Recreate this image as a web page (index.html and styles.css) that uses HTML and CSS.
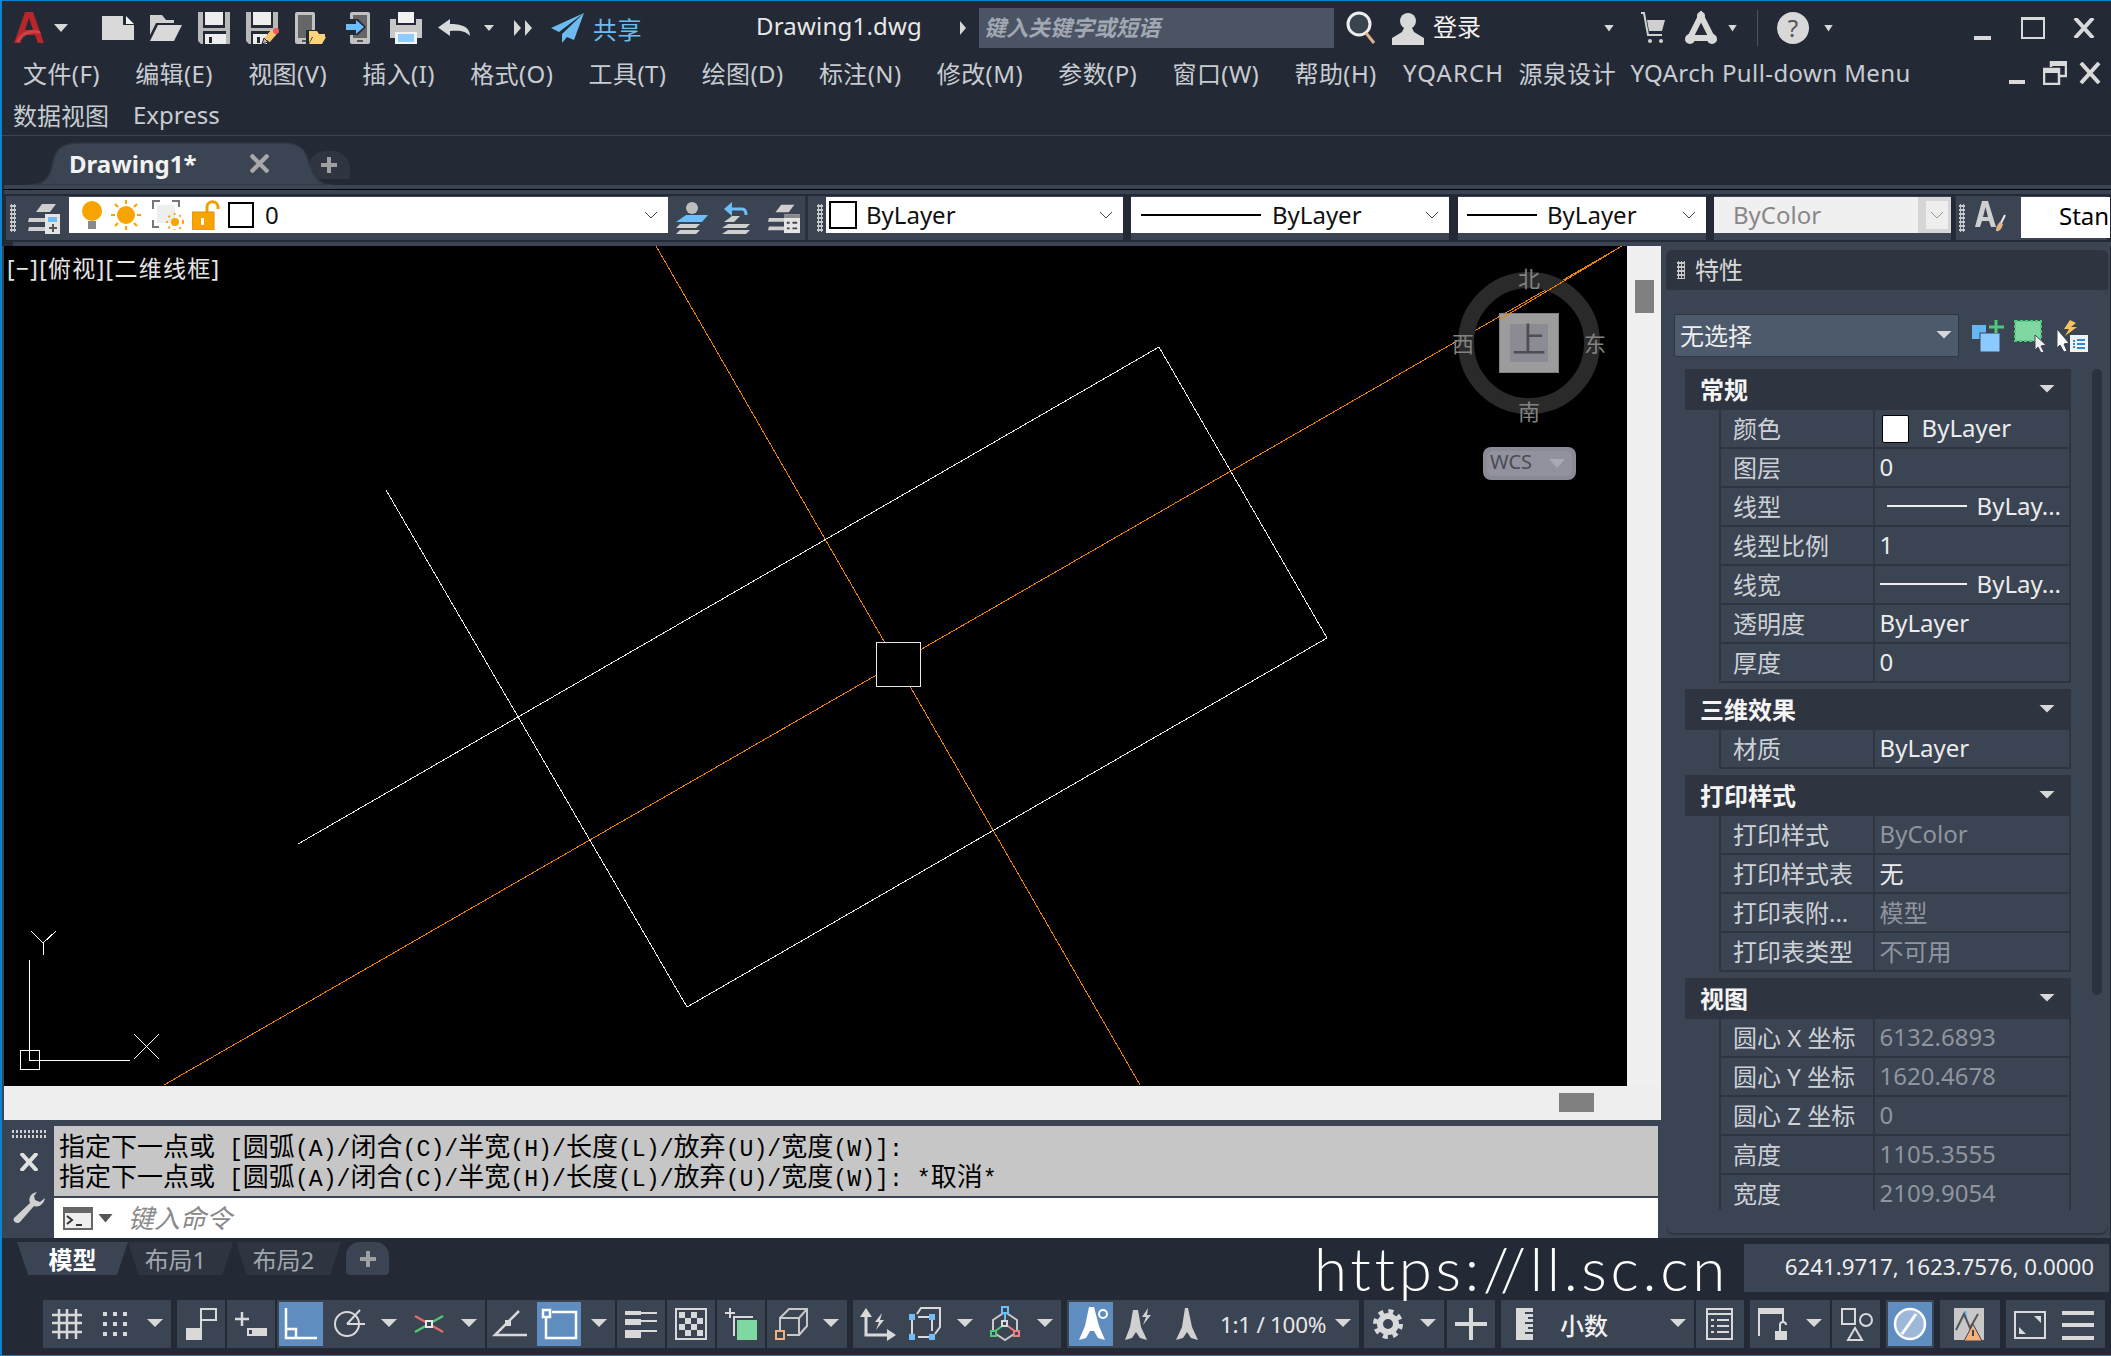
FILE: index.html
```html
<!DOCTYPE html>
<html lang="zh-CN">
<head>
<meta charset="utf-8">
<title>Drawing1.dwg</title>
<link rel="stylesheet" href="styles.css">
</head>
<body>
<div class="app">

<header class="titlebar">
  <svg class="logo" viewBox="0 0 30 32"><path fill="#b8252a" d="M0 31 11 0h8l11 31h-6l-3-8H9l-3 8zM11 18h8l-4-12z"/><path fill="#e0555a" opacity=".6" d="M2 29C8 20 14 16 26 19l1 3C16 19 10 23 5 31z"/></svg>
  <span class="caret caret-title"></span>
  <span class="slot slot-first"><svg viewBox="0 0 48 48"><path fill="#d9d9d9" d="M8 12h21v9h11v15H8z"/><path fill="#f2f2f2" d="M32 12l8 8h-8z"/></svg></span>
  <span class="slot"><svg viewBox="0 0 48 48"><path fill="#d0d0d0" d="M8 11h12l4 5h8v3H14L8 31z"/><path fill="#d9d9d9" d="M16 21h24l-8 16H8z"/></svg></span>
  <span class="slot"><svg viewBox="0 0 48 48"><path fill="#b9b9b9" d="M8 8h32v32H11l-3-3z"/><path fill="#232a35" d="M13 8h22v16H13zM13 27h23v13H13z"/><path fill="#eee" d="M15 8h18v13H15zM15 30h21v10H15z"/><path fill="#232a35" d="M19 33h3v6h-3z"/></svg></span>
  <span class="slot"><svg viewBox="0 0 48 48"><path fill="#b9b9b9" d="M8 8h32v18L26 40H11l-3-3z"/><path fill="#232a35" d="M13 8h22v16H13zM13 27h20v13H13z"/><path fill="#eee" d="M15 8h18v13H15zM15 30h14v10H15z"/><path fill="#232a35" d="M19 33h3v6h-3z"/><path fill="#b9b9b9" stroke="#232a35" d="M24 40l2-6 4 4z"/><path stroke="#f8c46c" stroke-width="7" d="M29 36l7-8"/><circle cx="38" cy="27" r="3" fill="#f15b5b"/></svg></span>
  <span class="slot"><svg viewBox="0 0 48 48"><rect x="9" y="8" width="20" height="32" rx="2" fill="#c2c2c2"/><rect x="12" y="11" width="14" height="23" fill="#666"/><rect x="16" y="36" width="5" height="2" fill="#555"/><path fill="#232a35" d="M20 26h10l10 4v10H20z"/><path fill="#fcd27a" d="M23 27h8l2 3h6v3H26l-3 6z"/><path fill="#fcd27a" d="M27 33h13l-4 7H23z"/></svg></span>
  <span class="slot"><svg viewBox="0 0 48 48"><rect x="16" y="8" width="20" height="32" rx="2" fill="#c2c2c2"/><rect x="19" y="11" width="14" height="23" fill="#666"/><rect x="23" y="36" width="6" height="2" fill="#555"/><path fill="#232a35" d="M10 15h14l8 8-8 8H10z"/><path fill="#6dbdf8" d="M12 20h10v-4l8 7-8 7v-4H12z"/></svg></span>
  <span class="slot"><svg viewBox="0 0 48 48"><path fill="#f2f2f2" d="M16 8h16v11H16z"/><path fill="#c8c8c8" d="M8 15h6v6h20v-6h6v19H8z"/><path fill="#f2f2f2" d="M13 28h22v12H13z"/><path fill="#8ecbff" d="M16 30h16v8H16z"/></svg></span>
  <span class="slot"><svg viewBox="0 0 48 48"><path fill="#d9d9d9" d="M8 23.5 20 15v5c10 0 20 2 20 12-4-5-10-6-20-5v5z"/></svg></span>
  <span class="caret caret-small"></span>
  <span class="redo"><svg viewBox="0 0 20 16"><path fill="#d9d9d9" d="M1 0l7 8-7 8zM12 0l7 8-7 8z"/></svg></span>
  <span class="share"><svg viewBox="0 0 34 30"><path fill="#6cbcf0" d="M33 0 0 15l8 4zM33 0 11 21v9l5-6 7 3z"/></svg><span class="share-text">共享</span></span>
  <span class="doc-name">Drawing1.dwg</span>
  <span class="arrow-right"></span>
  <span class="search">键入关键字或短语</span>
  <span class="search-icon"><svg viewBox="0 0 30 34"><circle cx="13" cy="13" r="11" fill="#3a4350" stroke="#eee" stroke-width="3"/><path stroke="#e0b48a" stroke-width="3" d="M20 22l8 10"/></svg></span>
  <span class="user"><svg viewBox="0 0 32 34"><circle cx="16" cy="10" r="8" fill="#d9d9d9"/><path fill="#d9d9d9" d="M12 17h8l2 4 10 6v7H0v-7l10-6z"/></svg></span>
  <span class="login">登录</span>
  <span class="caret caret-login"></span>
  <span class="cart"><svg viewBox="0 0 26 34"><path fill="none" stroke="#d0d0d0" stroke-width="2" d="M1 2h3l4 22h14"/><path fill="#d0d0d0" d="M7 9h18l-3 11H9z"/><circle cx="10" cy="30" r="2" fill="#d0d0d0"/><circle cx="21" cy="30" r="2" fill="#d0d0d0"/></svg></span>
  <span class="a360"><svg viewBox="0 0 32 34"><path fill="none" stroke="#d9d9d9" stroke-width="6" d="M16 5 5 27h22z"/><circle cx="16" cy="5" r="4" fill="#d9d9d9"/><circle cx="5" cy="28" r="5" fill="#d9d9d9"/><circle cx="27" cy="28" r="5" fill="#d9d9d9"/></svg></span>
  <span class="caret caret-a360"></span>
  <span class="v-divider"></span>
  <span class="help">?</span>
  <span class="caret caret-help"></span>
  <span class="win win-min"></span>
  <span class="win win-max"></span>
  <span class="win-x"><svg viewBox="0 0 22 20"><path stroke="#d9d9d9" stroke-width="4" d="M2 0l18 20M20 0 2 20"/></svg></span>
</header>

<nav class="menubar">
  <span>文件(F)</span><span>编辑(E)</span><span>视图(V)</span><span>插入(I)</span><span>格式(O)</span><span>工具(T)</span><span>绘图(D)</span><span>标注(N)</span><span>修改(M)</span><span>参数(P)</span><span>窗口(W)</span><span>帮助(H)</span><span class="tight-a">YQARCH</span><span class="tight-b">源泉设计</span><span class="tight-b">YQArch Pull-down Menu</span>
  <span class="mdi"><i class="mdi-min"></i><svg class="mdi-restore" viewBox="0 0 24 24"><path fill="none" stroke="#d9d9d9" stroke-width="2.5" d="M8 6V1h15v14h-6M1 8h15v15H1z"/><path stroke="#d9d9d9" stroke-width="4" d="M8 3h15M1 10h15"/></svg><svg class="mdi-x" viewBox="0 0 22 20"><path stroke="#d9d9d9" stroke-width="4" d="M2 0l18 20M20 0 2 20"/></svg></span>
</nav>
<nav class="menubar menubar-second"><span>数据视图</span><span>Express</span></nav>

<div class="tabstrip">
  <div class="doc-tab">
    <svg class="doc-tab-shape" viewBox="0 0 301 43"><path fill="#3b4453" stroke="#2f3644" stroke-width="1.5" d="M0 43c14 0 20-8 22-19C25 8 30 1 50 1h202c20 0 24 7 28 23 4 11 10 19 21 19z"/></svg>
    <span class="doc-tab-title">Drawing1*</span>
    <svg class="doc-tab-close" viewBox="0 0 20 20"><path stroke="#a8a8a8" stroke-width="4.5" d="M1 1l18 18M19 1 1 19"/></svg>
  </div>
  <div class="tab-add"><svg viewBox="0 0 16 16"><path stroke="#a0a0a0" stroke-width="4" d="M8 0v16M0 8h16"/></svg></div>
</div>
<div class="tabline"></div>

<div class="toolbar">
  <div class="tb-group tb-layers">
    <span class="grip"></span>
    <svg class="tb-ico" viewBox="0 0 34 32"><path fill="#cfcfcf" d="M8 10 14 2h14l-6 8zM1 16h18l-1 4H0zM1 25h16v4H0z"/><rect x="17" y="12" width="15" height="20" fill="#e4e4e4"/><rect x="20" y="15" width="9" height="5" fill="#6dbdf8"/><path stroke="#555" stroke-width="2" d="M21 26h8M25 22v8"/></svg>
  </div>
  <div class="dd dd-layer">
    <svg class="ico-bulb" viewBox="0 0 20 28"><circle cx="10" cy="10" r="10" fill="#f7a400"/><rect x="6" y="20" width="8" height="8" fill="#8a8a8a"/></svg>
    <svg class="ico-sun" viewBox="0 0 30 30"><circle cx="15" cy="15" r="9" fill="#f7a400"/><path stroke="#f7a400" stroke-width="2" d="M15 0v4M15 26v4M0 15h4M26 15h4M4 4l3 3M23 23l3 3M26 4l-3 3M4 26l3-3"/></svg>
    <svg class="ico-freeze" viewBox="0 0 32 30"><path fill="none" stroke="#777" stroke-width="2" d="M8 1H1v8M20 1h7v6M1 20v7h6"/><rect x="5" y="5" width="18" height="18" fill="#eee"/><circle cx="23" cy="22" r="4" fill="#f7a400"/><circle cx="23" cy="22" r="8" fill="none" stroke="#f7a400" stroke-width="2" stroke-dasharray="2 4"/></svg>
    <svg class="ico-lock" viewBox="0 0 28 30"><path fill="none" stroke="#f29e00" stroke-width="3" d="M15 14V7c0-7 11-7 11 0v2"/><rect y="12" width="22" height="18" fill="#f7a400" stroke="#e48f00"/><rect x="9" y="18" width="3" height="7" fill="#fff"/></svg>
    <span class="swatch"></span>
    <span class="dd-text">0</span>
    <svg class="chev" viewBox="0 0 12 7"><path fill="none" stroke="#444" d="M0 0l6 6 6-6"/></svg>
  </div>
  <div class="tb-group tb-layer-tools">
    <svg viewBox="0 0 32 32"><circle cx="16" cy="6" r="6" fill="#bdbdbd"/><path fill="#6dbdf8" d="M10 13h12l10 0-6 7H0z"/><path fill="#cfcfcf" d="M4 22h20l-4 4H0zM4 28h20l-4 4H0z"/></svg>
    <svg viewBox="0 0 32 32"><path fill="none" stroke="#6dbdf8" stroke-width="3" d="M8 7h12c3 0 4 2 4 6"/><path fill="#6dbdf8" d="M10 0v14L2 7z"/><path fill="#cfcfcf" d="M10 14h8l-6 6H2zM6 22h22l-4 4H0zM6 28h22l-4 4H0z"/></svg>
    <svg viewBox="0 0 34 32"><path fill="#cfcfcf" d="M8 10 14 2h14l-6 8zM1 16h18l-1 4H0zM1 25h16v4H0z"/><rect x="17" y="12" width="17" height="20" fill="#e4e4e4"/><rect x="17" y="12" width="17" height="4" fill="#888"/><path stroke="#444" stroke-width="2" d="M20 21h3M26 21h5M20 27h3M26 27h5"/></svg>
  </div>
  <div class="tb-group tb-grip"><span class="grip"></span></div>
  <div class="dd dd-color"><span class="swatch swatch-color"></span><span class="dd-text">ByLayer</span><svg class="chev" viewBox="0 0 12 7"><path fill="none" stroke="#444" d="M0 0l6 6 6-6"/></svg></div>
  <div class="dd dd-ltype"><span class="ltline ltline-long"></span><span class="dd-text">ByLayer</span><svg class="chev" viewBox="0 0 12 7"><path fill="none" stroke="#444" d="M0 0l6 6 6-6"/></svg></div>
  <div class="dd dd-lweight"><span class="ltline ltline-short"></span><span class="dd-text">ByLayer</span><svg class="chev" viewBox="0 0 12 7"><path fill="none" stroke="#444" d="M0 0l6 6 6-6"/></svg></div>
  <div class="dd dd-plot"><span class="dd-text dd-disabled">ByColor</span><span class="dd-btn"><svg class="chev-btn" viewBox="0 0 12 7"><path fill="none" stroke="#999" d="M0 0l6 6 6-6"/></svg></span></div>
  <div class="tb-group tb-style">
    <span class="grip"></span>
    <svg class="style-ico" viewBox="0 0 32 34"><path fill="#cfcfcf" d="M8 0h6l8 26h-5l-2-6H8l-2 6H1zM9 16h5L11.500 6z"/><path fill="#e0b48a" d="M22 30c0-5 2-7 4-9l3 2c-1 4-3 8-7 7z"/><path stroke="#eee" stroke-width="2" d="M27 22l4-8"/></svg>
    <span class="style-box">Standard</span>
  </div>
</div>
<div class="strip"></div>

<main class="main">
  <section class="left">
    <div class="viewport">
      <div class="canvas">
        <svg class="drawing" viewBox="4 246 1623 840">
          <g class="lines" fill="none" stroke-width="1">
            <path stroke="#f08000" d="M656 246 1140 1085M164 1085 1622 246"/>
            <path stroke="#e8e8e8" d="M298 844 1159 347 1327 638 687 1007 386 490"/>
            <rect x="876.500" y="642.500" width="44" height="44" fill="#000" stroke="#e8e8e8"/>
            <path stroke="#fff" d="M29.500 960V1060.500H130M20.500 1050.500h19v19h-19zM134 1034l25 25M159 1034l-25 25M31 931l12 12 13-12M43 943v12"/>
          </g>
          <circle cx="1529" cy="343" r="63" fill="none" stroke="#2a2a2a" stroke-width="16"/>
          <rect x="1499.500" y="313.500" width="59" height="59" fill="#9c9c9c" stroke="#808080"/>
          <rect x="1510" y="324" width="38" height="38" fill="#8b8b93"/>
          <path class="lines" stroke="#f08000" fill="none" d="M1499 320 1622 246"/>
          <text class="cube-top" x="1529" y="352">上</text>
          <text class="cube-dir" x="1529" y="287">北</text>
          <text class="cube-dir" x="1529" y="420">南</text>
          <text class="cube-dir" x="1463" y="352">西</text>
          <text class="cube-dir" x="1595" y="352">东</text>
          <rect x="1483" y="447" width="93" height="33" rx="8" fill="#8a8a96"/>
          <rect x="1487" y="451" width="85" height="25" rx="6" fill="#92929e"/>
          <text class="wcs" x="1490" y="469">WCS</text>
          <path fill="#a9a9b3" d="M1549 459h16l-8 9z"/>
        </svg>
        <span class="view-label">[−][俯视][二维线框]</span>
      </div>
      <div class="vscroll"><span class="vthumb"></span></div>
    </div>
    <div class="hscroll"><span class="hthumb"></span></div>
    <div class="cmd">
      <div class="cmd-handle">
        <span class="cmd-grip"></span>
        <svg class="cmd-x" viewBox="0 0 18 18"><path stroke="#e0e0e0" stroke-width="4" d="M1 0l16 18M17 0 1 18"/></svg>
        <svg class="cmd-wrench" viewBox="0 0 32 32"><path fill="#d0d0d0" d="M24 0c-6 1-9 6-7 11L1 26c-2 3 3 7 6 4L21 14c5 2 10-2 11-8l-5 4-5-2-1-4z"/></svg>
      </div>
      <div class="cmd-body">
        <div class="cmd-history">
          <div class="cmd-line"><span class="cn">指定下一点或</span> [<span class="cn">圆弧</span>(A)/<span class="cn">闭合</span>(C)/<span class="cn">半宽</span>(H)/<span class="cn">长度</span>(L)/<span class="cn">放弃</span>(U)/<span class="cn">宽度</span>(W)]:</div>
          <div class="cmd-line"><span class="cn">指定下一点或</span> [<span class="cn">圆弧</span>(A)/<span class="cn">闭合</span>(C)/<span class="cn">半宽</span>(H)/<span class="cn">长度</span>(L)/<span class="cn">放弃</span>(U)/<span class="cn">宽度</span>(W)]: *<span class="cn">取消</span>*</div>
        </div>
        <div class="cmd-input">
          <svg class="cmd-prompt" viewBox="0 0 30 23"><rect width="30" height="23" fill="#666"/><rect x="2" y="6" width="26" height="15" fill="#eee"/><path fill="none" stroke="#333" stroke-width="2" d="M4 9l5 4-5 4M13 18h6"/></svg>
          <span class="caret-dark"></span>
          <span class="cmd-placeholder">键入命令</span>
        </div>
      </div>
    </div>
  </section>

  <aside class="panel">
    <div class="panel-head"><span class="grip grip-panel"></span><span class="panel-title">特性</span></div>
    <div class="panel-body">
      <div class="panel-tools">
        <div class="sel">无选择<span class="tri sel-tri"></span></div>
        <svg class="pt-ico" viewBox="0 0 32 32"><rect y="5" width="14" height="14" fill="#66b6f2"/><rect x="8" y="13" width="20" height="19" fill="#8bc9ff" stroke="#3b4453"/><path stroke="#4ec77f" stroke-width="3" d="M24 0v13M17 7h15"/></svg>
        <svg class="pt-ico" viewBox="0 0 32 32"><rect x="1" y="1" width="26" height="20" fill="#7fd8a0" stroke="#4ec77f" stroke-width="2" stroke-dasharray="3 2"/><path fill="#eee" stroke="#3b4453" d="M21 15l11 10-5 1 3 6-3 1-3-6-3 3z"/></svg>
        <svg class="pt-ico" viewBox="0 0 32 32"><path fill="#f7c25c" d="M14 0l-6 9h5l-4 7 12-9h-6l5-4z"/><path fill="#fff" stroke="#3b4453" d="M1 9l12 14-5 1 3 7-3 1-4-7-3 3z"/><rect x="14" y="15" width="18" height="17" fill="#f2f2f2"/><path stroke="#2b8bd8" stroke-width="2" stroke-dasharray="2 1" d="M18 20v9"/><path stroke="#2b8bd8" stroke-width="2" d="M21 20h8M21 24h8M21 28h8"/></svg>
      </div>
      <div class="props">
        <div class="props-scroll">
          <section class="sec">
            <div class="sec-head">常规<span class="tri"></span></div>
            <div class="sec-rows">
              <div class="row"><span class="k">颜色</span><span class="v"><span class="v-swatch"></span>ByLayer</span></div>
              <div class="row"><span class="k">图层</span><span class="v">0</span></div>
              <div class="row"><span class="k">线型</span><span class="v"><span class="v-line v-line-a"></span>ByLay...</span></div>
              <div class="row"><span class="k">线型比例</span><span class="v">1</span></div>
              <div class="row"><span class="k">线宽</span><span class="v"><span class="v-line v-line-b"></span>ByLay...</span></div>
              <div class="row"><span class="k">透明度</span><span class="v">ByLayer</span></div>
              <div class="row"><span class="k">厚度</span><span class="v">0</span></div>
            </div>
          </section>
          <section class="sec">
            <div class="sec-head">三维效果<span class="tri"></span></div>
            <div class="sec-rows">
              <div class="row"><span class="k">材质</span><span class="v">ByLayer</span></div>
            </div>
          </section>
          <section class="sec">
            <div class="sec-head">打印样式<span class="tri"></span></div>
            <div class="sec-rows">
              <div class="row"><span class="k">打印样式</span><span class="v off">ByColor</span></div>
              <div class="row"><span class="k">打印样式表</span><span class="v">无</span></div>
              <div class="row"><span class="k">打印表附...</span><span class="v off">模型</span></div>
              <div class="row"><span class="k">打印表类型</span><span class="v off">不可用</span></div>
            </div>
          </section>
          <section class="sec">
            <div class="sec-head">视图<span class="tri"></span></div>
            <div class="sec-rows">
              <div class="row"><span class="k">圆心 X 坐标</span><span class="v off">6132.6893</span></div>
              <div class="row"><span class="k">圆心 Y 坐标</span><span class="v off">1620.4678</span></div>
              <div class="row"><span class="k">圆心 Z 坐标</span><span class="v off">0</span></div>
              <div class="row"><span class="k">高度</span><span class="v off">1105.3555</span></div>
              <div class="row"><span class="k">宽度</span><span class="v off">2109.9054</span></div>
            </div>
          </section>
        </div>
        <div class="props-track"></div>
      </div>
    </div>
  </aside>
</main>

<div class="lower">
  <div class="ltabs">
    <span class="ltab ltab-on">模型</span>
    <span class="ltab">布局1</span>
    <span class="ltab">布局2</span>
    <span class="ltab-add"><svg viewBox="0 0 16 16"><path stroke="#a0a0a0" stroke-width="4" d="M8 0v16M0 8h16"/></svg></span>
  </div>
  <div class="coords">6241.9717, 1623.7576, 0.0000</div>
</div>

<footer class="status">
  <div class="sg"><span class="s"><svg viewBox="0 0 48 48"><path stroke="#d9d9d9" stroke-width="2.500" d="M16 9v30M24 9v30M33 9v30M9 15h30M9 23h30M9 32h30"/></svg></span><span class="s"><svg viewBox="0 0 48 48"><path fill="#d9d9d9" d="M12 12h4v4h-4zM22 12h4v4h-4zM32 12h4v4h-4zM12 22h4v4h-4zM22 22h4v4h-4zM32 22h4v4h-4zM12 32h4v4h-4zM22 32h4v4h-4zM32 32h4v4h-4z"/></svg></span><span class="caret"></span></div>
  <div class="sg sep"><span class="s"><svg viewBox="0 0 48 48"><rect x="9" y="28" width="16" height="12" fill="#d9d9d9"/><path fill="none" stroke="#d9d9d9" stroke-width="2" d="M24 28V9h15v11H24"/></svg></span></div>
  <div class="sg"><span class="s"><svg viewBox="0 0 48 48"><path stroke="#d9d9d9" stroke-width="2.500" d="M15 12v14M8 19h14"/><rect x="20" y="28" width="20" height="8" fill="#d9d9d9"/><rect x="22" y="30" width="3" height="4" fill="#3b4453"/></svg></span></div>
  <div class="sg"><span class="s on"><svg viewBox="0 0 48 48"><path fill="none" stroke="#fff" stroke-width="2.500" d="M9 8v30h31M9 29h10v9"/></svg></span><span class="s"><svg viewBox="0 0 48 48"><circle cx="22" cy="24" r="12" fill="none" stroke="#d9d9d9" stroke-width="2"/><path fill="none" stroke="#d9d9d9" stroke-width="2" d="M22 24h18M22 24 35 10"/></svg></span><span class="caret"></span><span class="s"><svg viewBox="0 0 48 48"><path stroke="#e06c6c" stroke-width="2.500" d="M10 16l28 16"/><path stroke="#55c779" stroke-width="2.500" d="M10 32l28-16"/><rect x="21" y="21" width="6" height="6" fill="#3b4453" stroke="#e4e4e4" stroke-width="2"/></svg></span><span class="caret"></span></div>
  <div class="sg"><span class="s"><svg viewBox="0 0 48 48"><path fill="none" stroke="#d9d9d9" stroke-width="2.500" d="M40 35H8L32 11"/><rect x="18" y="20" width="6" height="6" fill="#d9d9d9"/></svg></span><span class="s on"><svg viewBox="0 0 48 48"><path fill="none" stroke="#fff" stroke-width="2.500" d="M8 10h7v7H8zM11 17v21h30V12H17"/></svg></span><span class="caret"></span></div>
  <div class="sg"><span class="s"><svg viewBox="0 0 48 48"><path fill="#d9d9d9" d="M8 11h16v4H8zM24 12h16v2H24zM8 19h16v6H8zM24 20h16v2H24zM8 30h16v8H8zM24 30h16v2H24z"/></svg></span></div>
  <div class="sg"><span class="s"><svg viewBox="0 0 48 48"><rect x="9" y="9" width="30" height="30" fill="none" stroke="#d9d9d9" stroke-width="2"/><path fill="#d9d9d9" d="M12 12h6v6h-6zM24 12h6v6h-6zM18 18h6v6h-6zM30 18h6v6h-6zM12 24h6v6h-6zM24 24h6v6h-6zM18 30h6v6h-6zM30 30h6v6h-6z"/></svg></span></div>
  <div class="sg"><span class="s"><svg viewBox="0 0 48 48"><path stroke="#d9d9d9" stroke-width="2" fill="none" d="M13 8v10M8 13h10M36 17H17v19"/><rect x="20" y="20" width="20" height="20" fill="#7fd8a0"/></svg></span></div>
  <div class="sg"><span class="s"><svg viewBox="0 0 48 48"><path fill="none" stroke="#c8c8c8" stroke-width="2" d="M13 30V18h19v17H20M13 18l9-9h18v17l-8 9M32 18l8-9"/><rect x="9" y="31" width="8" height="8" fill="none" stroke="#f5b07a" stroke-width="2"/></svg></span><span class="caret"></span></div>
  <div class="sg sep"><span class="s"><svg viewBox="0 0 48 48"><path fill="none" stroke="#d9d9d9" stroke-width="3" d="M13 14v21h22"/><path fill="#d9d9d9" d="M13 8l6 9H7zM43 35l-9-6v12zM29 13l-7 9h4l-3 8 8-10h-4z"/></svg></span><span class="s"><svg viewBox="0 0 48 48"><path fill="none" stroke="#d9d9d9" stroke-width="2" d="M11 20v14M17 37h11M31 17v14M17 17h11M16 14l4-6h19v19l-5 7"/><path fill="#6dbdf8" d="M8 14h6v6H8zM28 14h6v6h-6zM8 34h6v6H8zM28 34h6v6h-6z"/></svg></span><span class="caret"></span><span class="s"><svg viewBox="0 0 48 48"><path fill="none" stroke="#c8c8c8" stroke-width="2" d="M24 12 36 20v12l-12 8-12-8V20z"/><path stroke="#6dbdf8" stroke-width="2" d="M24 10v12"/><path stroke="#55c779" stroke-width="2" d="M24 24l-11 8"/><path stroke="#f08080" stroke-width="2" d="M24 24l11 8"/><rect x="21" y="7" width="6" height="6" fill="#3b4453" stroke="#6dbdf8" stroke-width="2"/><rect x="10" y="31" width="5" height="5" fill="#3b4453" stroke="#55c779" stroke-width="2"/><rect x="33" y="31" width="5" height="5" fill="#3b4453" stroke="#f08080" stroke-width="2"/><rect x="21" y="21" width="5" height="5" fill="#3b4453" stroke="#d9d9d9" stroke-width="2"/></svg></span><span class="caret"></span></div>
  <div class="sg sep"><span class="s on"><svg viewBox="0 0 48 48"><path fill="#fff" d="M22 7h5l5 19 6 14-7-2-4-7h-4l-4 7-7 2 6-14z"/><circle cx="36" cy="14" r="4" fill="none" stroke="#fff" stroke-width="2"/></svg></span><span class="s"><svg viewBox="0 0 48 48"><path fill="#d0d0d0" d="M18 10h5l3 17 6 13-7-2-4-6-4 6-7 2 5-13z"/><path fill="#d0d0d0" d="M33 8l-6 9h4l-3 8 8-10h-4z"/></svg></span><span class="s"><svg viewBox="0 0 48 48"><path fill="#d0d0d0" d="M22 8h3l4 19 6 13-7-2-4-6-4 6-7 2 6-13z"/></svg></span><span class="anno">1:1 / 100%</span><span class="caret"></span></div>
  <div class="sg sep-sm"><span class="s"><svg viewBox="0 0 48 48"><circle cx="24" cy="24" r="12.500" fill="none" stroke="#d9d9d9" stroke-width="5" stroke-dasharray="4.900 4.920"/><circle cx="24" cy="24" r="8" fill="none" stroke="#d9d9d9" stroke-width="6"/></svg></span><span class="caret"></span></div>
  <div class="sg sep-xs"><span class="s"><svg viewBox="0 0 48 48"><path stroke="#d9d9d9" stroke-width="4" d="M24 8v32M8 24h32"/></svg></span></div>
  <div class="sg sep"><span class="s"><svg viewBox="0 0 48 48"><path fill="#d9d9d9" d="M15 8h17v32H15z"/><path stroke="#3b4453" stroke-width="2" d="M24 13h8M27 18h5M24 23h8M27 28h5M24 33h8"/></svg></span><span class="units">小数</span><span class="caret"></span></div>
  <div class="sg"><span class="s"><svg viewBox="0 0 48 48"><rect x="11" y="9" width="25" height="30" fill="none" stroke="#d9d9d9" stroke-width="2"/><path stroke="#d9d9d9" stroke-width="2" d="M12 14h24M15 20h3M21 20h12M15 26h3M21 26h12M15 32h3M21 32h12"/></svg></span></div>
  <div class="sg sep"><span class="s"><svg viewBox="0 0 48 48"><path fill="none" stroke="#d9d9d9" stroke-width="2" d="M9 36V9h24v14"/><path fill="#d9d9d9" d="M9 9h24v5H9z"/><rect x="25" y="31" width="12" height="9" fill="#d9d9d9"/><path fill="none" stroke="#d9d9d9" stroke-width="2" d="M30 31v-6a3 3 0 0 1 6 0"/></svg></span><span class="caret"></span></div>
  <div class="sg"><span class="s"><svg viewBox="0 0 48 48"><rect x="10" y="9" width="13" height="15" fill="none" stroke="#d9d9d9" stroke-width="2"/><circle cx="34" cy="20" r="6" fill="none" stroke="#d9d9d9" stroke-width="2"/><path fill="none" stroke="#d9d9d9" stroke-width="2" d="M23 28l7 12H16z"/></svg></span></div>
  <div class="sg sep"><span class="s on"><svg viewBox="0 0 48 48"><circle cx="24" cy="24" r="15" fill="#9db8d8" stroke="#fff" stroke-width="2.500"/><path stroke="#fff" stroke-width="3" d="M16 34l14-20"/></svg></span></div>
  <div class="sg sep sg-clean"><svg viewBox="0 0 60 48"><rect x="14" y="8" width="30" height="32" fill="#c8c8c8"/><path fill="#6dbdf8" d="M24 11h3v8h-3z"/><path fill="none" stroke="#555" stroke-width="2" d="M16 30l8-16 6 14 8-14"/><path fill="#f5b07a" stroke="#3b4453" d="M33 24l9 17H24z"/><path stroke="#3b4453" stroke-width="2" d="M33 30v6"/></svg></div>
  <div class="sg sep sg-last"><span class="s"><svg viewBox="0 0 48 48"><rect x="9" y="12" width="30" height="26" fill="none" stroke="#d9d9d9" stroke-width="2"/><path fill="#d9d9d9" d="M28 16h7v7zM13 34v-7l7 7z"/></svg></span><span class="s"><svg viewBox="0 0 48 48"><path fill="#d9d9d9" d="M8 11h32v4H8zM8 23h32v4H8zM8 36h32v4H8z"/></svg></span></div>
</footer>

<span class="watermark">https://ll.sc.cn</span>
</div>
</body>
</html>
```

FILE: styles.css
```css
* { box-sizing: border-box; }
html, body { margin: 0; padding: 0; background: #232a35; }
body { width: 2111px; height: 1356px; overflow: hidden; }
svg { display: block; flex: none; }
.app {
  position: relative;
  width: 2111px;
  height: 1356px;
  background: #232a35;
  border-top: 1px solid #0a84d0;
  border-left: 2px solid #0a84d0;
  border-bottom: 1px solid #0a84d0;
  font-family: "Noto Sans", "Noto Sans CJK SC", sans-serif;
  font-size: 24px;
  color: #d0d4da;
  display: flex;
  flex-direction: column;
  overflow: hidden;
}

/* shared triangles */
.caret { display: block; flex: none; width: 32px; height: 48px; position: relative; }
.caret::before {
  content: "";
  position: absolute;
  left: 8px;
  top: 19px;
  width: 16px;
  height: 8px;
  background: #d8d8d8;
  clip-path: polygon(0 0, 100% 0, 50% 100%);
}
.tri {
  display: block;
  width: 16px;
  height: 8px;
  background: #d8d8d8;
  clip-path: polygon(0 0, 100% 0, 50% 100%);
}

/* title bar */
.titlebar { height: 54px; flex: none; display: flex; align-items: center; padding-left: 12px; }
.logo { width: 30px; height: 32px; }
.caret-title { width: 14px; height: 8px; margin-left: 10px; }
.caret-title::before, .caret-small::before, .caret-login::before, .caret-a360::before, .caret-help::before {
  left: 0; top: 0; width: 100%; height: 100%;
}
.slot { display: block; width: 48px; height: 48px; flex: none; }
.slot svg { width: 48px; height: 48px; }
.slot-first { margin-left: 26px; }
.caret-small { width: 10px; height: 6px; margin-left: 6px; }
.redo { width: 20px; height: 16px; margin-left: 19px; }
.redo svg { width: 20px; height: 16px; }
.share { display: flex; align-items: center; margin-left: 18px; }
.share svg { width: 34px; height: 30px; }
.share-text { color: #6cbcf0; margin-left: 8px; letter-spacing: .5px; }
.doc-name { color: #e8e8e8; margin: 0 0 5px 114px; width: 204px; letter-spacing: .2px; }
.arrow-right { width: 6px; height: 14px; background: #d8d8d8; clip-path: polygon(0 0, 100% 50%, 0 100%); }
.search {
  margin-left: 13px;
  width: 355px;
  height: 40px;
  background: #4a5465;
  color: #a2a8b2;
  font-size: 22px;
  font-style: italic;
  font-weight: 700;
  padding-left: 5px;
  line-height: 38px;
  flex: none;
}
.search-icon { margin-left: 12px; width: 30px; height: 34px; }
.search-icon svg { width: 30px; height: 34px; }
.user { margin-left: 16px; width: 32px; height: 34px; }
.user svg { width: 32px; height: 34px; }
.login { color: #f4f4f4; margin: 0 0 5px 9px; width: 48px; }
.caret-login { width: 10px; height: 7px; margin-left: 123px; }
.cart { margin-left: 26px; width: 26px; height: 34px; }
.cart svg { width: 26px; height: 34px; }
.a360 { margin-left: 19px; width: 32px; height: 34px; }
.a360 svg { width: 32px; height: 34px; }
.caret-a360 { width: 9px; height: 7px; margin-left: 11px; }
.v-divider { width: 1px; height: 36px; background: #4a5362; margin-left: 20px; }
.help {
  margin-left: 19px;
  width: 32px;
  height: 32px;
  border-radius: 50%;
  background: #d8d8d8;
  color: #555;
  font-size: 24px;
  line-height: 32px;
  text-align: center;
  flex: none;
}
.caret-help { width: 9px; height: 7px; margin-left: 15px; }
.win { display: block; flex: none; }
.win-min { width: 17px; height: 4px; background: #d9d9d9; margin-left: 141px; margin-top: 20px; }
.win-max { width: 24px; height: 22px; border: 2px solid #d9d9d9; border-top-width: 3px; margin-left: 30px; }
.win-x { width: 22px; height: 20px; margin-left: 28px; }
.win-x svg { width: 22px; height: 20px; }

/* menus */
.menubar { height: 41px; flex: none; display: flex; align-items: center; gap: 35.300px; padding: 0 0 6px 21px; color: #c8ccd2; letter-spacing: .4px; }
.menubar .tight-a { margin-left: -9px; letter-spacing: 1.100px; }
.menubar .tight-b { margin-left: -21px; }
.menubar-second { height: 39px; gap: 24px; padding: 0 0 2px 11px; letter-spacing: 0; }
.mdi { display: flex; align-items: center; margin-left: auto; margin-right: 10px; }
.mdi-min { display: block; width: 16px; height: 4px; background: #d9d9d9; margin-top: 18px; }
.mdi-restore { width: 24px; height: 24px; margin-left: 18px; }
.mdi-x { width: 22px; height: 22px; margin-left: 12px; }

/* doc tabs */
.tabstrip { height: 50px; flex: none; border-top: 1px solid #3b4453; display: flex; align-items: flex-end; padding-left: 28px; }
.doc-tab { position: relative; width: 301px; height: 43px; flex: none; display: flex; align-items: center; padding-left: 39px; }
.doc-tab-shape { position: absolute; left: 0; top: 0; width: 301px; height: 43px; }
.doc-tab-title { position: relative; color: #f2f2f2; font-weight: 700; font-size: 24px; }
.doc-tab-close { position: absolute; left: 220px; top: 12px; width: 19px; height: 19px; }
.tab-add {
  width: 42px;
  height: 28px;
  margin-left: -23px;
  margin-bottom: 6px;
  background: #2f3642;
  border-radius: 18px 18px 0 0;
  display: flex;
  align-items: center;
  justify-content: center;
  flex: none;
}
.tab-add svg { width: 16px; height: 16px; }
.tabline { height: 9px; flex: none; background: linear-gradient(#3b4453 0 4px, #000 4px 5px, #3b4453 5px); margin-left: 2px; }

/* toolbar */
.toolbar { height: 44px; margin-top: 2px; flex: none; display: flex; align-items: flex-start; padding-left: 4px; }
.tb-group { height: 44px; background: #3b4453; display: flex; align-items: center; flex: none; }
.grip {
  display: block;
  flex: none;
  width: 6px;
  height: 28px;
  background-image: radial-gradient(#c8c8c8 1.200px, transparent 1.400px);
  background-size: 3px 4px;
}
.tb-layers { width: 63px; padding-left: 4px; }
.tb-ico { width: 34px; height: 32px; margin-left: 12px; }
.dd {
  height: 36px;
  margin-top: 1px;
  background: #fff;
  color: #000;
  display: flex;
  align-items: center;
  flex: none;
  box-shadow: 0 7px 0 #3b4453, 0 -1px 0 #3b4453;
}
.dd-text { color: #111; margin-bottom: 2px; }
.dd-disabled { color: #888; margin-left: 19px; }
.chev { width: 12px; height: 7px; margin-left: auto; margin-right: 11px; }
.dd-layer { width: 599px; padding-left: 13px; }
.ico-bulb { width: 20px; height: 28px; }
.ico-sun { width: 30px; height: 30px; margin-left: 9px; }
.ico-freeze { width: 32px; height: 30px; margin-left: 11px; }
.ico-lock { width: 28px; height: 30px; margin-left: 8px; }
.swatch { width: 26px; height: 26px; border: 2px solid #000; background: #fff; margin-left: 8px; flex: none; }
.dd-layer .dd-text { margin-left: 11px; }
.tb-layer-tools { width: 137px; gap: 14px; padding-left: 8px; }
.tb-layer-tools svg { width: 32px; height: 32px; }
.tb-grip { width: 21px; padding-left: 9px; border-left: 3px solid #2a313d; }
.dd-color { width: 297px; padding-left: 3px; }
.swatch-color { width: 28px; height: 28px; margin-left: 0; }
.dd-color .dd-text { margin-left: 9px; }
.dd-ltype { width: 318px; margin-left: 8px; padding-left: 10px; }
.ltline { display: block; height: 2px; background: #000; flex: none; }
.ltline-long { width: 120px; }
.ltline-short { width: 70px; }
.dd-ltype .dd-text { margin-left: 11px; }
.dd-lweight { width: 248px; margin-left: 9px; padding-left: 9px; }
.dd-lweight .dd-text { margin-left: 10px; }
.dd-plot { width: 237px; margin-left: 8px; background: linear-gradient(#f0f0f0, #f0f0f0) no-repeat 0 0 / 204px 100%, #d4d6d8; }
.dd-plot .dd-text { flex: none; }
.dd-btn { margin-left: auto; margin-right: 3px; width: 22px; height: 28px; background: #eee; display: flex; align-items: center; justify-content: center; }
.chev-btn { width: 12px; height: 7px; }
.tb-style { margin-left: 4px; width: 152px; padding-left: 3px; border-left: 1px solid #2a313d; height: 44px; }
.style-ico { width: 32px; height: 34px; margin-left: 9px; }
.style-box { display: block; width: 89px; height: 41px; margin: 1px 0 0 15px; background: #fff; color: #000; padding-left: 38px; line-height: 38px; overflow: hidden; white-space: nowrap; align-self: flex-start; flex: none; }
.strip { height: 6px; flex: none; background: linear-gradient(#3b4453, #3b4453) no-repeat 11px 2px; }

/* main */
.main { height: 992px; flex: none; display: flex; }
.left { width: 1659px; flex: none; padding-left: 2px; display: flex; flex-direction: column; background: #3b4453; }
.viewport { height: 840px; display: flex; flex: none; }
.canvas { position: relative; width: 1623px; height: 840px; background: #000; flex: none; overflow: hidden; }
.drawing { position: absolute; left: 0; top: 0; width: 1623px; height: 840px; }
.lines { shape-rendering: crispEdges; }
.view-label { position: absolute; left: 3px; top: 5px; color: #e4e4e4; font-size: 23px; line-height: 34px; letter-spacing: 1.300px; white-space: nowrap; }
.cube-top { font: 34px "Noto Sans CJK SC", sans-serif; fill: #4e4e54; text-anchor: middle; }
.cube-dir { font: 22px "Noto Sans CJK SC", sans-serif; fill: #828282; text-anchor: middle; }
.wcs { font: 20px "Noto Sans", sans-serif; fill: #4a4a55; }
.vscroll { width: 34px; flex: none; background: #f0f0f0; padding: 34px 0 0 8px; }
.vthumb { display: block; width: 19px; height: 33px; background: #808080; }
.hscroll { height: 34px; flex: none; background: #eee; padding: 7px 0 0 1555px; }
.hthumb { display: block; width: 35px; height: 19px; background: #808080; }

/* command line */
.cmd { height: 118px; flex: none; display: flex; padding-top: 6px; }
.cmd-handle { width: 50px; flex: none; display: flex; flex-direction: column; align-items: center; }
.cmd-grip { display: block; width: 36px; height: 9px; margin-top: 3px; background-image: radial-gradient(#d0d0d0 1.200px, transparent 1.400px); background-size: 4px 5px; }
.cmd-x { width: 18px; height: 18px; margin-top: 15px; }
.cmd-wrench { width: 32px; height: 32px; margin-top: 21px; }
.cmd-body { width: 1604px; flex: none; display: flex; flex-direction: column; gap: 2px; }
.cmd-history { height: 70px; background: #c6c6c6; color: #000; font: 23.200px/30px "Liberation Mono", monospace; padding: 4px 0 0 5px; overflow: hidden; }
.cmd-line { height: 30px; white-space: pre; }
.cn { font-family: "Noto Sans CJK SC", sans-serif; font-size: 26px; line-height: 30px; }
.cmd-input { height: 40px; background: #fff; display: flex; align-items: center; padding-left: 9px; }
.cmd-prompt { width: 30px; height: 23px; }
.caret-dark { width: 15px; height: 9px; margin-left: 5px; background: #555; clip-path: polygon(0 0, 100% 0, 50% 100%); flex: none; }
.cmd-placeholder { font-size: 26px; font-style: italic; color: #8a8a8a; margin: 0 0 2px 15px; }

/* properties */
.panel { width: 449px; flex: none; background: #3b4453; padding: 4px 2px 5px 5px; display: flex; flex-direction: column; }
.panel-head { height: 40px; flex: none; background: #2e3440; border-radius: 6px 6px 0 0; display: flex; align-items: center; padding-left: 11px; }
.grip-panel { width: 8px; height: 18px; }
.panel-title { margin: 0 0 3px 10px; color: #d8d8d8; }
.panel-body { flex: 1; min-height: 0; background: #3b4453; border-radius: 8px; padding: 24px 0 0 8px; box-shadow: 0 2px 0 #2e3440; display: flex; flex-direction: column; }
.panel-tools { display: flex; align-items: flex-start; height: 43px; flex: none; }
.sel { width: 285px; height: 43px; background: #4d5a6c; border: 1px solid #2e3440; border-radius: 2px; display: flex; align-items: center; padding: 0 0 2px 5px; color: #eee; flex: none; }
.sel-tri { margin-left: auto; margin-right: 6px; }
.pt-ico { width: 32px; height: 32px; margin: 6px 0 0 10px; }
.pt-ico:nth-of-type(1) { margin-left: 13px; }
.props { display: flex; margin-top: 12px; flex: 1; min-height: 0; padding-left: 11px; }
.props-scroll { width: 386px; height: 841px; overflow: hidden; display: flex; flex-direction: column; gap: 6px; flex: none; }
.props-track { width: 10px; height: 626px; margin-left: 21px; background: #2b323d; border-radius: 5px; flex: none; }
.sec { flex: none; }
.sec-head { height: 41px; background: #2e3440; color: #f4f4f4; font-weight: 700; display: flex; align-items: center; justify-content: space-between; padding: 0 16px 2px 15px; }
.sec-rows { margin-left: 34px; background: #2e3440; padding: 0 2px; display: flex; flex-direction: column; }
.row { height: 39px; display: flex; gap: 2px; padding-bottom: 2px; }
.k, .v { background: #3b4453; display: flex; align-items: center; white-space: nowrap; height: 37px; padding-bottom: 2px; }
.k { width: 152px; padding-left: 12px; color: #cdd1d6; }
.v { width: 195px; padding-left: 5px; color: #ececec; }
.v.off { color: #8f959e; }
.v-swatch { width: 27px; height: 28px; background: #fff; border: 1px solid #000; border-radius: 2px; margin: 2px 13px 0 2px; flex: none; }
.v-line { display: block; height: 2px; background: #eee; flex: none; }
.v-line-a { width: 80px; margin: 0 10px 0 7px; }
.v-line-b { width: 87px; margin-right: 10px; }

/* lower strip */
.lower { height: 62px; flex: none; display: flex; align-items: flex-start; justify-content: space-between; padding: 4px 2px 0 15px; }
.ltabs { display: flex; height: 33px; align-items: stretch; }
.ltab { width: 105px; padding-right: 10px; background: #2e3540; color: #a0a6ad; display: flex; align-items: center; justify-content: center; clip-path: polygon(0 0, 100% 0, 90% 100%, 10% 100%); }
.ltab:nth-child(3) { margin-left: 3px; }
.ltab-on { width: 111px; padding-right: 0; background: #3b4453; color: #fff; font-weight: 700; }
.ltab-add { width: 43px; margin-left: 5px; background: #3b4453; border-radius: 14px 14px 4px 4px; display: flex; align-items: center; justify-content: center; }
.ltab-add svg { width: 16px; height: 16px; }
.coords { width: 365px; height: 48px; margin-top: 2px; background: #3b4453; color: #eee; font-size: 22.300px; line-height: 46px; text-align: right; padding-right: 15px; flex: none; }

/* status bar */
.status { height: 48px; flex: none; display: flex; gap: 2px; padding-left: 41px; }
.sg { display: flex; background: #3b4453; flex: none; height: 48px; align-items: center; }
.sep { margin-left: 4px; }
.sep-sm { margin-left: 3px; }
.sep-xs { margin-left: 1px; }
.s { display: block; width: 48px; height: 48px; flex: none; position: relative; }
.s svg { width: 48px; height: 48px; position: relative; }
.s.on::before { content: ""; position: absolute; left: 2px; right: 2px; top: 2px; bottom: 2px; background: #5f8dbf; }
.anno { width: 116px; flex: none; font-size: 22.500px; letter-spacing: -0.300px; color: #e8e8e8; padding-left: 9px; white-space: nowrap; }
.units { width: 113px; flex: none; padding-left: 11px; color: #f0f0f0; font-weight: 500; }
.sg-clean { width: 60px; }
.sg-clean svg { width: 60px; height: 48px; }
.sg-last { width: 99px; }

.watermark {
  position: absolute;
  left: 1312px;
  top: 1232px;
  color: #fff;
  font-family: "Lato", sans-serif;
  font-weight: 300;
  font-size: 60px;
  line-height: 70px;
  letter-spacing: 3.700px;
  white-space: nowrap;
}
```
